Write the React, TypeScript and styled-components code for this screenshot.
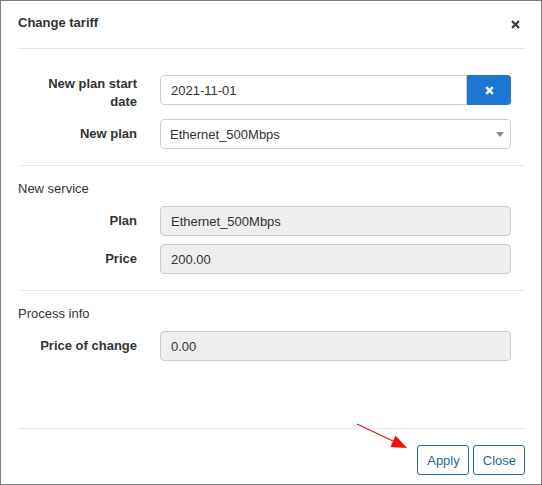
import React from "react";
import styled, { createGlobalStyle } from "styled-components";

const GlobalStyle = createGlobalStyle`
  html, body { margin: 0; padding: 0; background: #ffffff; }
  body { font-family: "Liberation Sans", Arial, sans-serif; font-size: 13px; color: #333; }
  * { box-sizing: border-box; }
`;

const Dialog = styled.div`
  position: relative;
  width: 542px;
  height: 485px;
  border: 1px solid #7b7b7b;
  background: #fff;
  display: flex;
  flex-direction: column;
`;

const Header = styled.div`
  margin: 0 16px 0 17px;
  padding: 13px 5px 16px 0;
  border-bottom: 1px solid #e5e5e5;
  display: flex;
  justify-content: space-between;
  align-items: center;
`;

const Title = styled.h4`
  margin: 0;
  font-size: 13px;
  line-height: 18px;
  font-weight: bold;
  color: #333;
`;

const CloseX = styled.button`
  border: 0;
  background: none;
  padding: 0;
  width: 10px;
  height: 10px;
  display: flex;
  align-items: center;
  justify-content: center;
  margin-top: 2px;
  cursor: pointer;
`;

const Body = styled.div`
  flex: 1;
  margin: 0 16px 0 17px;
  padding-top: 26px;
`;

const Section = styled.div<{ $divided?: boolean }>`
  padding-bottom: 8px;
  ${(p) => (p.$divided ? "border-top: 1px solid #e5e5e5; padding-top: 14px;" : "")}
`;

const SectionTitle = styled.div`
  font-size: 13px;
  line-height: 18px;
  color: #333;
  margin-bottom: 8px;
`;

const Row = styled.div`
  display: grid;
  grid-template-columns: 119px 1fr;
  column-gap: 23px;
  align-items: start;
  padding-right: 14px;
  margin-bottom: 8px;
`;

const Label = styled.label<{ $multi?: boolean }>`
  text-align: right;
  font-weight: bold;
  font-size: 13px;
  line-height: 18px;
  color: #333;
  padding-top: ${(p) => (p.$multi ? "0" : "6px")};
  padding-left: 20px;
`;

const Control = styled.input<{ $disabled?: boolean; $joined?: boolean }>`
  width: 100%;
  height: 30px;
  margin: 0;
  border: 1px solid #cccccc;
  border-radius: ${(p) => (p.$joined ? "4px 0 0 4px" : "4px")};
  background: ${(p) => (p.$disabled ? "#eeeeee" : "#ffffff")};
  padding: 0 10px;
  font-family: "Liberation Sans", Arial, sans-serif;
  font-size: 13px;
  color: #333;
  outline: none;
`;

const InputGroup = styled.div`
  display: flex;
  height: 30px;
`;

const ClearButton = styled.button`
  width: 44px;
  height: 30px;
  flex: none;
  border: 0;
  margin: 0;
  border-radius: 0 4px 4px 0;
  background: #1c77d3;
  display: flex;
  align-items: center;
  justify-content: center;
  cursor: pointer;
`;

const SelectBox = styled.div`
  position: relative;
  height: 30px;
  border: 1px solid #cccccc;
  border-radius: 4px;
  background: #fff;
  padding: 0 9px;
  display: flex;
  align-items: center;
  font-size: 13px;
  color: #333;
`;

const Caret = styled.span`
  position: absolute;
  right: 6px;
  top: 12px;
  width: 0;
  height: 0;
  border-left: 4px solid transparent;
  border-right: 4px solid transparent;
  border-top: 5px solid #888;
`;

const Footer = styled.div`
  margin: 0 16px 0 17px;
  border-top: 1px solid #e5e5e5;
  padding: 16px 0 9px;
  display: flex;
  justify-content: flex-end;
  gap: 4px;
`;

const OutlineButton = styled.button`
  height: 30px;
  padding: 0 8px 0 9px;
  border: 1px solid #2a68a0;
  border-radius: 3px;
  background: #fff;
  color: #2c64a0;
  font-family: "Liberation Sans", Arial, sans-serif;
  font-size: 13px;
  cursor: pointer;
`;

const Arrow = styled.svg`
  position: absolute;
  left: 0;
  top: 0;
  pointer-events: none;
`;

export default function App() {
  return (
    <>
      <GlobalStyle />
      <Dialog>
        <Header>
          <Title>Change tariff</Title>
          <CloseX aria-label="Close">
            <svg width="9" height="9" viewBox="0 0 9 9">
              <path d="M1 1 L8 8 M8 1 L1 8" stroke="#333" strokeWidth="2" strokeLinecap="butt" />
            </svg>
          </CloseX>
        </Header>
        <Body>
          <Section>
            <Row>
              <Label $multi>New plan start date</Label>
              <InputGroup>
                <Control $joined defaultValue="2021-11-01" />
                <ClearButton aria-label="Clear">
                  <svg width="9" height="9" viewBox="0 0 9 9">
                    <path d="M1.2 1.2 L7.8 7.8 M7.8 1.2 L1.2 7.8" stroke="#fff" strokeWidth="2.4" />
                  </svg>
                </ClearButton>
              </InputGroup>
            </Row>
            <Row>
              <Label>New plan</Label>
              <SelectBox>
                Ethernet_500Mbps
                <Caret />
              </SelectBox>
            </Row>
          </Section>
          <Section $divided>
            <SectionTitle>New service</SectionTitle>
            <Row>
              <Label>Plan</Label>
              <Control $disabled readOnly defaultValue="Ethernet_500Mbps" />
            </Row>
            <Row>
              <Label>Price</Label>
              <Control $disabled readOnly defaultValue="200.00" />
            </Row>
          </Section>
          <Section $divided>
            <SectionTitle>Process info</SectionTitle>
            <Row>
              <Label>Price of change</Label>
              <Control $disabled readOnly defaultValue="0.00" />
            </Row>
          </Section>
        </Body>
        <Footer>
          <OutlineButton>Apply</OutlineButton>
          <OutlineButton>Close</OutlineButton>
        </Footer>
        <Arrow width="542" height="485" viewBox="0 0 542 485">
          <line x1="356" y1="423" x2="394" y2="441" stroke="#ee1111" strokeWidth="1.3" />
          <polygon points="406,447 389.5,446 394.5,434.5" fill="#ee1111" />
        </Arrow>
      </Dialog>
    </>
  );
}
